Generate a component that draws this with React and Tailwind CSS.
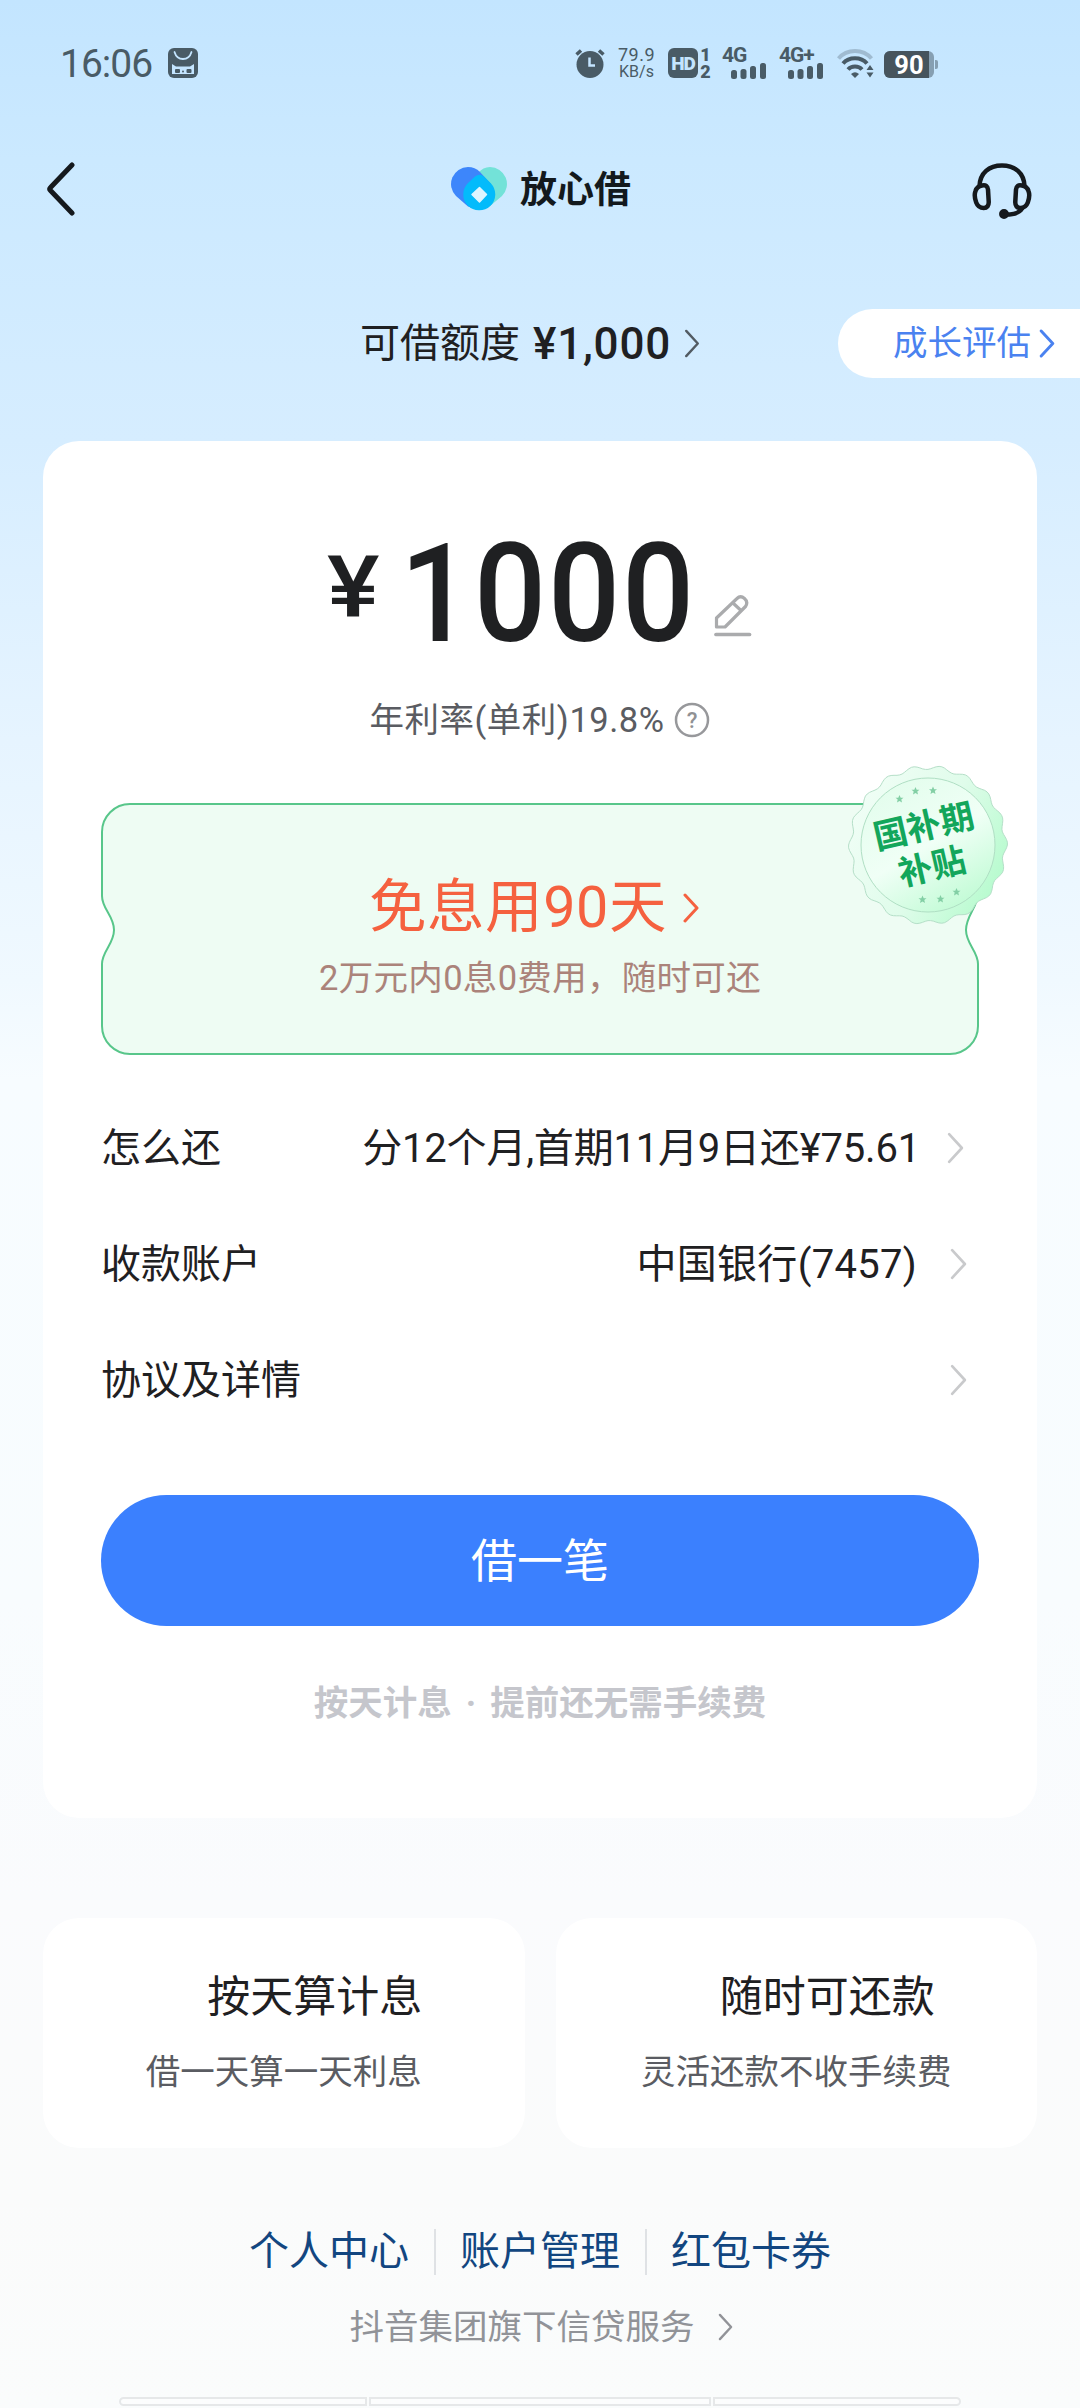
const rows = [
    { label: "怎么还", value: "分12个月,首期11月9日还¥75.61", track: "tracking-[-0.2px]", gap: "ml-[27px]", shift: "mr-[15px]" },
    { label: "收款账户", value: "中国银行(7457)", track: "tracking-[0.3px]", gap: "ml-[33px]", shift: "mr-3" },
    { label: "协议及详情", value: "", track: "tracking-normal", gap: "ml-[33px]", shift: "mr-3" },
];

const features = [
    { title: "按天算计息", desc: "借一天算一天利息" },
    { title: "随时可还款", desc: "灵活还款不收手续费" },
];

const links = ["个人中心", "账户管理", "红包卡券"];

const Chevron = ({ className, strokeWidth = 2.5 }) => (
    <svg
        viewBox="0 0 16 30"
        className={className}
        fill="none"
        stroke="currentColor"
        strokeWidth={strokeWidth}
        strokeLinecap="round"
        strokeLinejoin="round">
        <path d="M2 2L14 15L2 28" />
    </svg>
);

const Signal = ({ label }) => (
    <div className="flex h-[30px] w-11 flex-col justify-between">
        <span className="h-[15px] text-[21px] leading-[15px] font-bold tracking-[-1px] whitespace-nowrap">
            {label}
        </span>
        <svg viewBox="0 0 36 17" className="-mt-px ml-[9px] h-[17px] w-9 shrink-0" fill="currentColor">
            <rect x="0" y="8" width="6" height="9" rx="2.5" />
            <rect x="9.5" y="7" width="6" height="10" rx="2.5" />
            <rect x="19" y="4" width="6" height="13" rx="2.5" />
            <rect x="29" y="1" width="6" height="16" rx="2.5" />
        </svg>
    </div>
);

const StatusBar = () => (
    <div className="flex h-[126px] items-center pl-[60px] text-[#495b66]">
        <span className="w-[108px] pt-0.5 text-[39px] leading-none tracking-[-1px]">16:06</span>
        <svg viewBox="0 0 30 30" className="size-[30px]">
            <rect width="30" height="30" rx="6" fill="currentColor" />
            <path d="M6.5 4C8 9 11 11 15 11s7-2 8.500-7" fill="none" stroke="#c4e5ff" strokeWidth="1.8" strokeLinecap="round" />
            <path d="M4 16l4 2.500h14l4-2.500v10H4z" fill="#c4e5ff" />
            <rect x="7" y="21" width="5" height="4" rx="1" fill="currentColor" />
            <rect x="18.500" y="21" width="5" height="4" rx="1" fill="currentColor" />
            <circle cx="15" cy="23.500" r="1" fill="currentColor" />
        </svg>

        <svg viewBox="0 0 30 30" className="ml-[377px] size-[30px]">
            <path d="M1.500 6.500L6 2.500M28.500 6.500L24 2.500" stroke="currentColor" strokeWidth="3.500" />
            <circle cx="15" cy="16.500" r="13.500" fill="currentColor" />
            <path d="M14.500 9.500V17.500H20" fill="none" stroke="#c4e5ff" strokeWidth="2.500" />
        </svg>
        <div className="ml-[13px] flex w-[37px] flex-col items-center text-[18px] leading-[17px]">
            <span className="tracking-[0.5px]">79.9</span>
            <span className="text-[16px]">KB/s</span>
        </div>
        <div className="ml-[13px] flex size-[30px] items-center justify-center rounded-[6px] bg-[#495b66]">
            <span className="text-[19px] leading-none font-black tracking-[-1px] text-[#c4e5ff]">HD</span>
        </div>
        <div className="ml-[2px] flex h-8 w-[11px] flex-col items-center justify-between text-[18px] leading-[15px] font-black">
            <span>1</span>
            <span>2</span>
        </div>
        <div className="ml-[11px]">
            <Signal label="4G" />
        </div>
        <div className="ml-[13px]">
            <Signal label="4G+" />
        </div>
        <svg viewBox="0 0 37 30" className="ml-[14px] h-[30px] w-[37px]" fill="none" stroke="currentColor" strokeWidth="4">
            <path d="M1.500 10.500C10 0.500 26 0.500 34.500 10.500" opacity="0.3" />
            <path d="M6 15.500C12 8.500 24 8.500 30 15.500" />
            <path d="M11 21.500C14.500 17.500 21.500 17.500 25 21.500" />
            <path d="M14 26Q18 22.500 22 26L18 30z" fill="currentColor" stroke="none" />
            <path d="M33 17l3.500 5h-7zM33 29.500l3.500-5h-7z" fill="currentColor" stroke="none" />
        </svg>
        <svg viewBox="0 0 54 27" className="mt-0.5 ml-[10px] h-[27px] w-[54px]">
            <rect x="0" y="0" width="50" height="27" rx="6" fill="#869fb2" />
            <path d="M6 0H45V27H6A6 6 0 0 1 0 21V6A6 6 0 0 1 6 0z" fill="#46545d" />
            <path d="M51 9h1a2 2 0 0 1 2 2v5a2 2 0 0 1-2 2h-1z" fill="#869fb2" />
            <text x="25" y="22.500" textAnchor="middle" fontSize="25.500" fontWeight="700" fill="#fff">90</text>
        </svg>
    </div>
);

const Header = () => (
    <div className="flex h-[126px] items-center justify-between pr-12 pl-[45px]">
        <svg viewBox="0 0 32 54" className="h-[54px] w-[60px]" fill="none" stroke="#15191d" strokeWidth="5" strokeLinecap="round" strokeLinejoin="round" preserveAspectRatio="xMinYMid">
            <path d="M27 3L5.500 25.500Q4 27 5.500 28.500L27 51" />
        </svg>
        <div className="flex items-center pl-[5px]">
            <svg viewBox="0 0 56 44" className="h-11 w-14">
                <path d="M39 0A17 17 0 0 1 51 29L39 39 20 24 27 6Q32 0 39 0z" fill="#73e2d8" />
                <path d="M17 0Q24 0 29 5L40 17 28 43 17 39.500 5 29A17 17 0 0 1 17 0z" fill="#3d86fb" />
                <path d="M17 16L24 9.500Q28.500 6 33 9.500L40 16.500A16 16 0 1 1 17 16z" fill="#03bbfb" />
                <path d="M28.500 20.500l7 7-7 7.500-7.500-7.500z" fill="#def5ff" stroke="#def5ff" strokeWidth="1.500" strokeLinejoin="round" />
            </svg>
            <h1 className="ml-[13px] pt-0.5 text-[37px] leading-none font-bold text-[#13191d]">放心借</h1>
        </div>
        <svg viewBox="0 0 60 56" className="mt-1 h-14 w-[60px]" fill="none" stroke="#15191d" strokeWidth="4.500" strokeLinecap="round">
            <path d="M7.500 23C8 10 17 2.500 30 2.500S52 10 52.500 23" />
            <path d="M10 22.500c4-1 5.500 1 6 4l.7 12c.3 4-1.700 6.500-5 6.500s-6-1.500-7.500-5.500c-1.500-4-2-8-.7-11.500 1-3 3-5 6.500-5.500z" />
            <path d="M50 22.500c-4-1-5.500 1-6 4l-.7 12c-.3 4 1.700 6.500 5 6.500s6-1.500 7.500-5.500c1.500-4 2-8 .7-11.500-1-3-3-5-6.500-5.500z" />
            <path d="M50 45.500C47.500 50 43 51.500 34 51.500" />
            <circle cx="32" cy="51" r="2.700" fill="#15191d" />
        </svg>
    </div>
);

const star = "M0-4L1.200-1.300 4-1.200 1.800.600 2.500 3.500 0 1.900-2.500 3.500-1.800.600-4-1.200-1.200-1.300z";
const stars = [
    [-28.500, -46], [-12.500, -54], [5, -54.500],
    [-5.500, 54.500], [12.500, 54], [28.500, 47],
];

// Wavy outline of the seal: 18 bumps on a circle
const sealPath = () => {
    const points = [];
    for (let i = 0; i < 360; i += 2) {
        const a = ((i - 90) * Math.PI) / 180;
        const r = 77.5 + 2 * Math.cos((18 * (i - 9) * Math.PI) / 180);
        points.push(`${(r * Math.cos(a)).toFixed(1)} ${(r * Math.sin(a)).toFixed(1)}`);
    }
    return `M${points.join("L")}Z`;
};

const Seal = () => (
    <svg viewBox="-82 -82 164 164" className="absolute -top-10 right-[-31px] size-[164px]">
        <defs>
            <linearGradient id="seal" x1="0" y1="0.2" x2="1" y2="0.7">
                <stop offset="0" stopColor="#f2fef7" />
                <stop offset="0.55" stopColor="#dffcea" />
                <stop offset="1" stopColor="#b5fbcd" />
            </linearGradient>
            <linearGradient id="sealInner" x1="0.2" y1="0" x2="0.8" y2="1">
                <stop offset="0" stopColor="#e2fdec" />
                <stop offset="0.5" stopColor="#f0fff6" />
                <stop offset="1" stopColor="#bdfbd2" />
            </linearGradient>
        </defs>
        <path d={sealPath()} fill="url(#seal)" stroke="#b5dfc8" strokeWidth="1" />
        <circle r="67" fill="url(#sealInner)" stroke="#b0dfc4" strokeWidth="1" />
        {stars.map(([x, y]) => (
            <path key={`${x},${y}`} d={star} transform={`translate(${x} ${y})`} fill="#83cfa5" />
        ))}
        <g transform="rotate(-13)" fill="#13a65b" fontSize="34" fontWeight="700" textAnchor="middle">
            <text x="0" y="-7">国补期</text>
            <text x="-1" y="34">补贴</text>
        </g>
    </svg>
);

const Ticket = () => (
    <div className="relative mt-[34px] flex h-[252px] flex-col items-center">
        <svg viewBox="0 0 878 252" className="absolute inset-0 h-full w-full">
            <path
                d="M29 1H849A28 28 0 0 1 877 29V91C877 103 865 113 865 127S877 148 877 161V223A28 28 0 0 1 849 251H29A28 28 0 0 1 1 223V161C1 148 13 141 13 127S1 106 1 93V29A28 28 0 0 1 29 1z"
                fill="#eefcf3"
                stroke="#58c68a"
                strokeWidth="2"
            />
        </svg>
        <div className="relative mt-[69px] mr-[11px] flex h-[72px] items-center text-[#f5613f]">
            <span className="text-[57.5px] leading-[72px] tracking-[0.6px]">免息用90天</span>
            <Chevron className="ml-[15px] h-[30px] w-[18px]" strokeWidth={3} />
        </div>
        <p className="relative mt-[10px] text-[34.5px] leading-[48px] tracking-[0.3px] text-[#ab837a]">2万元内0息0费用，随时可还</p>
        <Seal />
    </div>
);

const App = () => {
    return (
        <div className="flex h-[2408px] w-[1080px] flex-col overflow-hidden bg-linear-[180deg,#c3e5ff_0px,#cbe9ff_160px,#d6edff_440px,#e6f4ff_740px,#f0f9ff_980px,#f7fcff_1080px,#f8fcfe_1600px,#fafbfd_1900px,#fafbfb_2200px,#fafcfc_2408px] font-[Roboto,'Noto_Sans_CJK_SC',sans-serif] text-[#1f2022]">
            <StatusBar />
            <Header />

            <div className="mt-[57px] flex h-[69px] items-center pl-[360px]">
                <span className="text-[40px] leading-none">可借额度</span>
                <span className="ml-[13px] text-[44px] leading-none font-medium tracking-[0.8px]">¥1,000</span>
                <Chevron className="ml-[13px] h-[29px] w-4 text-[#525b63]" />
                <div className="ml-auto flex h-[69px] w-[242px] items-center rounded-l-full bg-white pl-[55px] text-[#4a82f0]">
                    <span className="text-[34.5px] leading-none">成长评估</span>
                    <Chevron className="ml-2 h-[29px] w-4" strokeWidth={3} />
                </div>
            </div>

            <div className="mx-[43px] mt-[63px] flex h-[1377px] shrink-0 flex-col rounded-[36px] bg-white px-[58px] pt-[70px]">
                <div className="flex h-40 shrink-0 items-center pl-[226px]">
                    <span className="mb-1.5 w-[73px] origin-left scale-x-115 text-[86px] leading-none font-medium">¥</span>
                    <span className="mt-1.5 w-[294px] origin-left scale-x-92 text-[138px] leading-none font-medium tracking-[2px]">1000</span>
                    <svg viewBox="0 0 38 44" className="mt-[49px] ml-5 h-11 w-[38px]" fill="none" stroke="#aaabad" strokeWidth="3.200" strokeLinecap="round" strokeLinejoin="round">
                        <path d="M2.500 33V24L23 4.500Q26.500 1 30.500 4.500T31.500 12.500L11 33z" />
                        <path d="M19.500 9.500L26.500 16" />
                        <path d="M2 40.500H35.500" strokeWidth="3.700" />
                    </svg>
                </div>
                <div className="flex h-[98px] shrink-0 items-center justify-center text-[#5a5c62]">
                    <span className="text-[34.5px] leading-none tracking-[0.5px]">年利率(单利)19.8%</span>
                    <svg viewBox="0 0 36 36" className="ml-[10px] size-9">
                        <circle cx="18" cy="18" r="16" fill="none" stroke="#97989b" strokeWidth="2.500" />
                        <text x="18" y="25.500" textAnchor="middle" fontSize="22" fontWeight="500" fill="#909194">?</text>
                    </svg>
                </div>

                <Ticket />

                <div className="mt-[35px]">
                    {rows.map((row) => (
                        <div key={row.label} className="flex h-[116px] items-center text-[40px] leading-none">
                            <span className="pt-0.5">{row.label}</span>
                            <span className={`ml-auto pt-0.5 ${row.track}`}>{row.value}</span>
                            <Chevron className={`h-8 w-[17px] text-[#c9cacc] ${row.gap} ${row.shift}`} />
                        </div>
                    ))}
                </div>

                <button className="mt-[57px] h-[131px] shrink-0 rounded-full bg-[#3b80fe] text-[46px] leading-none text-white">
                    借一笔
                </button>
                <p className="mt-[51px] text-center text-[34.5px] leading-[52px] font-bold text-[#c5c6cc] [word-spacing:5.5px]">
                    按天计息 · 提前还无需手续费
                </p>
            </div>

            <div className="mx-[43px] mt-[100px] grid h-[230px] shrink-0 grid-cols-2 gap-[31px]">
                {features.map((item) => (
                    <div key={item.title} className="flex flex-col items-center rounded-[36px] bg-white pt-[49px]">
                        <p className="pl-[62px] text-[43px] leading-[60px]">{item.title}</p>
                        <p className="mt-[15px] text-[34.5px] leading-[60px] text-[#5a5c62]">{item.desc}</p>
                    </div>
                ))}
            </div>

            <div className="mt-[81px] flex h-[46px] shrink-0 items-center justify-center divide-x-2 divide-[#dfe2e5] text-[40px] leading-[46px] text-[#124680]">
                {links.map((link) => (
                    <a key={link} className="px-[24.500px]">
                        {link}
                    </a>
                ))}
            </div>
            <div className="mt-[26px] flex h-[52px] shrink-0 items-center justify-center pl-[3px] text-[#919398]">
                <span className="text-[34.5px] leading-none">抖音集团旗下信贷服务</span>
                <Chevron className="ml-[22px] h-7 w-[17px]" />
            </div>

            <div className="mx-[119px] mt-11 flex h-[9px] shrink-0 gap-[2px]">
                <div className="w-[248px] rounded-l-[5px] border-2 border-[#e6e8e9] bg-[#fcfdfd]"></div>
                <div className="w-[342px] border-2 border-[#e6e8e9] bg-[#fcfdfd]"></div>
                <div className="w-[248px] rounded-r-[5px] border-2 border-[#e6e8e9] bg-[#fcfdfd]"></div>
            </div>
        </div>
    );
};

export default App;
